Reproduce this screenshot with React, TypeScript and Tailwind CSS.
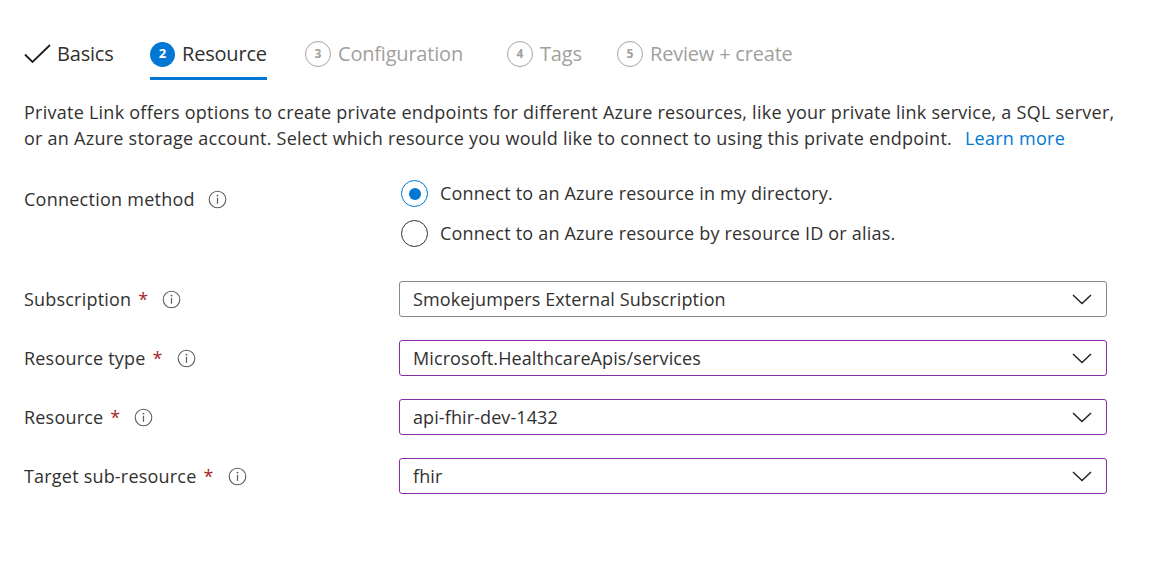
import { ReactNode } from 'react'

const font = { fontFamily: '"Segoe UI", "Open Sans", "Noto Sans", sans-serif' }

interface Step {
  num: number
  label: string
  width: string
  state: 'done' | 'active' | 'todo'
}

const steps: Step[] = [
  { num: 1, label: 'Basics', width: 'w-[126px]', state: 'done' },
  { num: 2, label: 'Resource', width: 'w-[155px]', state: 'active' },
  { num: 3, label: 'Configuration', width: 'w-[202px]', state: 'todo' },
  { num: 4, label: 'Tags', width: 'w-[110px]', state: 'todo' },
  { num: 5, label: 'Review + create', width: 'w-[200px]', state: 'todo' },
]

function InfoIcon() {
  return (
    <svg width="19" height="19" viewBox="0 0 19 19" className="shrink-0">
      <circle cx="9.5" cy="9.5" r="8.3" fill="none" stroke="#605e5c" strokeWidth="1.1" />
      <circle cx="9.5" cy="5.6" r="0.95" fill="#605e5c" />
      <rect x="8.9" y="7.8" width="1.2" height="6" fill="#605e5c" />
    </svg>
  )
}

function Chevron() {
  return (
    <svg width="20" height="11" viewBox="0 0 20 11" className="shrink-0">
      <path d="M1 1 L10 9.5 L19 1" fill="none" stroke="#201f1e" strokeWidth="1.4" />
    </svg>
  )
}

function StepTab({ step }: { step: Step }) {
  const active = step.state === 'active'
  return (
    <div className={`${step.width} shrink-0`}>
      <div className="inline-flex flex-col">
        <div className={`flex items-center h-[40px] ${step.state === 'done' ? 'gap-[6px]' : 'gap-[7px]'}`}>
          {step.state === 'done' && (
            <svg width="27" height="20" viewBox="0 0 27 20">
              <path d="M1 10.5 L8.5 18 L26 1" fill="none" stroke="#201f1e" strokeWidth="1.8" />
            </svg>
          )}
          {active && (
            <div className="w-[25px] h-[25px] rounded-full bg-[#0078d4] text-white text-[13px] font-bold flex items-center justify-center">
              {step.num}
            </div>
          )}
          {step.state === 'todo' && (
            <div className="w-[26px] h-[26px] rounded-full border-[1.5px] border-[#a8a6a4] text-[#a19f9d] text-[12px] font-bold flex items-center justify-center">
              {step.num}
            </div>
          )}
          <span
            className={`text-[20px] tracking-[-0.2px] ${step.state === 'todo' ? 'text-[#a19f9d]' : 'text-[#323130]'}`}
          >
            {step.label}
          </span>
        </div>
        <div className={`mt-[3px] h-[3px] ${active ? 'bg-[#0078d4]' : 'bg-transparent'}`} />
      </div>
    </div>
  )
}

function Label({ children, required }: { children: ReactNode; required?: boolean }) {
  return (
    <div className="w-[375px] shrink-0 flex items-center text-[18px] tracking-[0.2px] text-[#323130]">
      <span>{children}</span>
      {required && <span className="text-[#a4262c] ml-[7px]">*</span>}
      <span className="ml-[14px] flex">
        <InfoIcon />
      </span>
    </div>
  )
}

function Dropdown({ value, purple }: { value: string; purple?: boolean }) {
  return (
    <div
      className={`w-[708px] h-[36px] rounded-[3px] border flex items-center justify-between pl-[13px] pr-[14px] text-[18px] tracking-[0.1px] text-[#323130] ${
        purple ? 'border-[#8a2da5]' : 'border-[#8a8886]'
      }`}
    >
      <span>{value}</span>
      <Chevron />
    </div>
  )
}

const fields = [
  { label: 'Subscription', value: 'Smokejumpers External Subscription', purple: false },
  { label: 'Resource type', value: 'Microsoft.HealthcareApis/services', purple: true },
  { label: 'Resource', value: 'api-fhir-dev-1432', purple: true },
  { label: 'Target sub-resource', value: 'fhir', purple: true },
]

export default function App() {
  return (
    <div className="w-full h-[563px] bg-white pl-[24px] overflow-hidden" style={font}>
      {/* Pasos del asistente */}
      <div className="flex pt-[34px]">
        {steps.map((s) => (
          <StepTab key={s.num} step={s} />
        ))}
      </div>

      <p className="mt-[19px] text-[18px] leading-[26px] tracking-[0.25px] text-[#323130] whitespace-nowrap">
        Private Link offers options to create private endpoints for different Azure resources, like your private link service, a SQL server,
        <br />
        or an Azure storage account. Select which resource you would like to connect to using this private endpoint.{' '}
        <span className="ml-[8px] text-[#0078d4]">Learn more</span>
      </p>

      {/* Metodo de conexion */}
      <div className="flex mt-[29px]">
        <div className="w-[375px] shrink-0 flex items-center h-[26px] mt-[6px] text-[18px] tracking-[0.25px] text-[#323130]">
          <span>Connection method</span>
          <span className="ml-[13px] flex">
            <InfoIcon />
          </span>
        </div>
        <div className="flex flex-col gap-[13px] pl-[2px] text-[18px] tracking-[0.2px] text-[#323130]">
          <div className="flex items-center gap-[12px] h-[27px]">
            <div className="w-[27px] h-[27px] rounded-full border border-[#0078d4] flex items-center justify-center">
              <div className="w-[12px] h-[12px] rounded-full bg-[#0078d4]" />
            </div>
            <span>Connect to an Azure resource in my directory.</span>
          </div>
          <div className="flex items-center gap-[12px] h-[27px]">
            <div className="w-[27px] h-[27px] rounded-full border border-[#323130]" />
            <span>Connect to an Azure resource by resource ID or alias.</span>
          </div>
        </div>
      </div>

      <div className="flex flex-col gap-[23px] mt-[34px]">
        {fields.map((f) => (
          <div key={f.label} className="flex items-center">
            <Label required>{f.label}</Label>
            <Dropdown value={f.value} purple={f.purple} />
          </div>
        ))}
      </div>
    </div>
  )
}
